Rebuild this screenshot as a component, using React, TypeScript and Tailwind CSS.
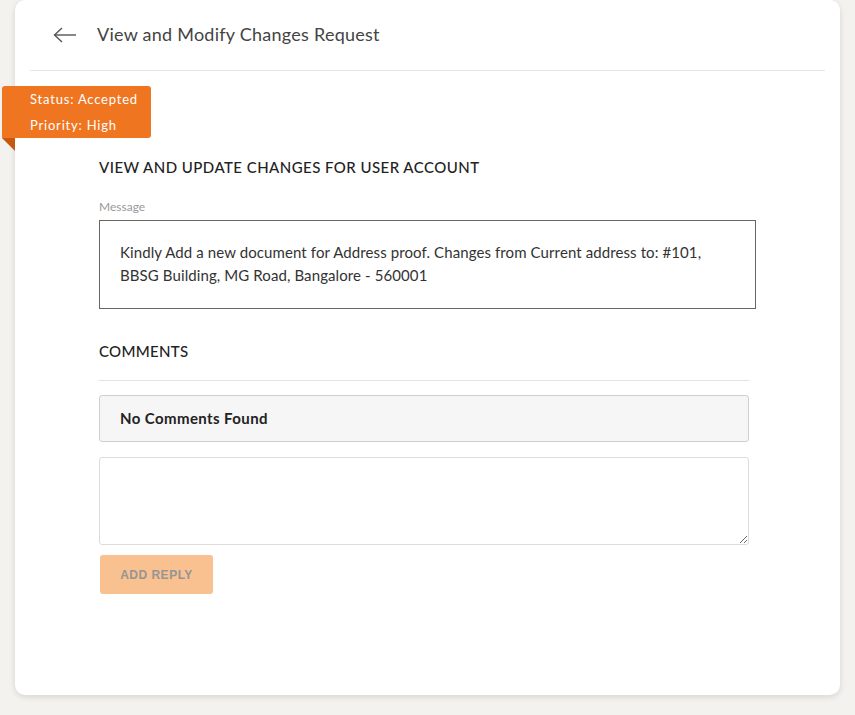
import React from 'react';

const MESSAGE =
  'Kindly Add a new document for Address proof. Changes from Current address to: #101, BBSG Building, MG Road, Bangalore - 560001';

function BackArrow() {
  return (
    <svg width="24" height="16" viewBox="0 0 24 16" fill="none" stroke="#555" strokeWidth="1.4">
      <line x1="1.5" y1="8" x2="23" y2="8" />
      <polyline points="9,1 1.5,8 9,15" strokeLinejoin="miter" />
    </svg>
  );
}

export default function App() {
  return (
    <div
      className="min-h-[715px] w-full bg-[#f3f2ee]"
      style={{ fontFamily: 'Lato, "Noto Sans", sans-serif' }}
    >
      <div className="relative ml-[15px] h-[695px] w-[825px] rounded-[10px] bg-white shadow-[0_2px_6px_rgba(0,0,0,0.12)]">
        {/* header */}
        <div className="mx-[15px] flex h-[71px] items-center border-b border-[#e6e6e6] pb-[1px]">
          <button className="ml-[23px] flex items-center">
            <BackArrow />
          </button>
          <h1 className="ml-[20px] text-[18px] font-normal tracking-[0.25px] text-[#444]">
            View and Modify Changes Request
          </h1>
        </div>

        {/* status ribbon */}
        <div className="absolute left-[-13px] top-[86px]">
          <div className="h-[52px] w-[149px] rounded-r-[3px] rounded-tl-[3px] bg-[#f07521] pl-[28px] text-[13px] leading-[26px] tracking-[0.8px] text-white">
            <div>Status: Accepted</div>
            <div>Priority: High</div>
          </div>
          <div className="h-0 w-0 border-l-[13px] border-t-[13px] border-l-transparent border-t-[#c8580f]" />
        </div>

        <div className="ml-[84px] pt-[86px]">
          <h2 className="text-[15px] font-medium leading-[20px] tracking-[0.45px] text-[#222]">
            VIEW AND UPDATE CHANGES FOR USER ACCOUNT
          </h2>

          <div className="mt-[22px] text-[12px] leading-[16px] text-[#999]">Message</div>
          <div className="mt-[5px] h-[89px] w-[657px] border border-[#6b655e] px-[20px] pt-[20px] text-[15px] leading-[23px] tracking-[0.1px] text-[#333]">
            {MESSAGE}
          </div>

          <h2 className="mt-[32px] text-[15px] font-medium leading-[20px] tracking-[0.3px] text-[#222]">COMMENTS</h2>
          <div className="mt-[19px] w-[650px] border-t border-[#e3e3e3]" />

          <div className="mt-[14px] flex h-[47px] w-[650px] items-center rounded-[3px] border border-[#cfcfcf] bg-[#f6f6f6] px-[20px] text-[15px] font-bold tracking-[0.4px] text-[#222]">
            No Comments Found
          </div>

          <textarea className="mt-[15px] block h-[88px] w-[650px] rounded-[3px] border border-[#dcdcdc] bg-white p-2 text-[14px] outline-none" />

          <button
            className="ml-[1px] mt-[10px] flex h-[39px] w-[113px] items-center justify-center rounded-[3px] bg-[#f9c18f] text-[12px] font-bold tracking-[0.5px] text-[#959595]"
            style={{ fontFamily: '"Liberation Sans", Arial, sans-serif' }}
          >
            ADD REPLY
          </button>
        </div>
      </div>
    </div>
  );
}
